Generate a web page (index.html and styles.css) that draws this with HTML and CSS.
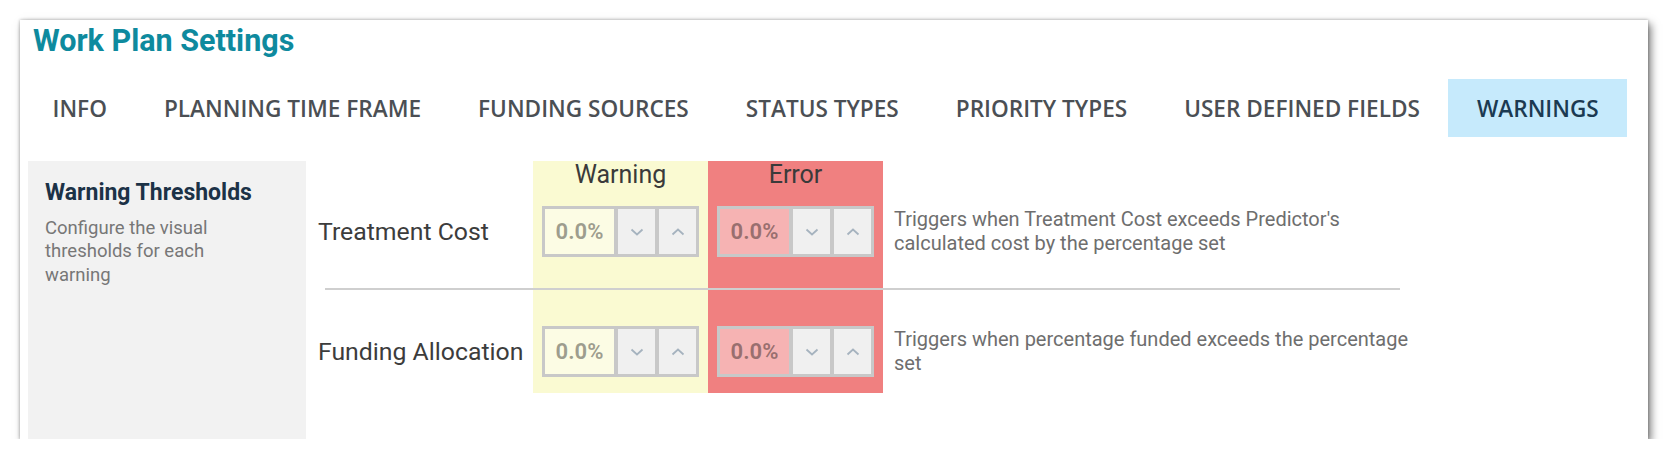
FILE: index.html
```html
<!DOCTYPE html>
<html>
<head>
<meta charset="utf-8">
<link rel="stylesheet" href="styles.css">
</head>
<body>
<div class="card">
  <h1 class="title">Work Plan Settings</h1>
  <nav class="tabs">
    <div class="tab">INFO</div>
    <div class="tab">PLANNING TIME FRAME</div>
    <div class="tab">FUNDING SOURCES</div>
    <div class="tab">STATUS TYPES</div>
    <div class="tab">PRIORITY TYPES</div>
    <div class="tab">USER DEFINED FIELDS</div>
    <div class="tab active">WARNINGS</div>
  </nav>
  <div class="main">
    <aside class="side">
      <h2 class="side-title">Warning Thresholds</h2>
      <p class="side-desc">Configure the visual thresholds for each warning</p>
    </aside>
    <div class="grid">
      <div class="bg bg-warn"></div>
      <div class="bg bg-err"></div>
      <div class="head c2">Warning</div>
      <div class="head c3">Error</div>

      <div class="label r1">Treatment Cost</div>
      <div class="spin c2 r1">
        <span class="val">0.0%</span>
        <span class="btn"><svg width="14" height="8" viewBox="0 0 14 8"><polyline points="1.5,1.5 7,6.5 12.5,1.5" fill="none" stroke="#a6b3bf" stroke-width="1.8"/></svg></span>
        <span class="btn"><svg width="14" height="8" viewBox="0 0 14 8"><polyline points="1.5,6.5 7,1.5 12.5,6.5" fill="none" stroke="#a6b3bf" stroke-width="1.8"/></svg></span>
      </div>
      <div class="spin c3 r1">
        <span class="val">0.0%</span>
        <span class="btn"><svg width="14" height="8" viewBox="0 0 14 8"><polyline points="1.5,1.5 7,6.5 12.5,1.5" fill="none" stroke="#a6b3bf" stroke-width="1.8"/></svg></span>
        <span class="btn"><svg width="14" height="8" viewBox="0 0 14 8"><polyline points="1.5,6.5 7,1.5 12.5,6.5" fill="none" stroke="#a6b3bf" stroke-width="1.8"/></svg></span>
      </div>
      <div class="desc r1">Triggers when Treatment Cost exceeds Predictor's calculated cost by the percentage set</div>

      <div class="sep"></div>

      <div class="label r2">Funding Allocation</div>
      <div class="spin c2 r2">
        <span class="val">0.0%</span>
        <span class="btn"><svg width="14" height="8" viewBox="0 0 14 8"><polyline points="1.5,1.5 7,6.5 12.5,1.5" fill="none" stroke="#a6b3bf" stroke-width="1.8"/></svg></span>
        <span class="btn"><svg width="14" height="8" viewBox="0 0 14 8"><polyline points="1.5,6.5 7,1.5 12.5,6.5" fill="none" stroke="#a6b3bf" stroke-width="1.8"/></svg></span>
      </div>
      <div class="spin c3 r2">
        <span class="val">0.0%</span>
        <span class="btn"><svg width="14" height="8" viewBox="0 0 14 8"><polyline points="1.5,1.5 7,6.5 12.5,1.5" fill="none" stroke="#a6b3bf" stroke-width="1.8"/></svg></span>
        <span class="btn"><svg width="14" height="8" viewBox="0 0 14 8"><polyline points="1.5,6.5 7,1.5 12.5,6.5" fill="none" stroke="#a6b3bf" stroke-width="1.8"/></svg></span>
      </div>
      <div class="desc r2">Triggers when percentage funded exceeds the percentage set</div>
    </div>
  </div>
</div>
</body>
</html>
```
FILE: styles.css
```css
* { box-sizing: border-box; }
html, body { margin: 0; padding: 0; background: #ffffff; }
body { font-family: Roboto, "Liberation Sans", sans-serif; }

.card {
  margin: 20px 0 0 20px;
  width: 1628px;
  background: #fff;
  box-shadow: 3px 4px 8px rgba(0,0,0,0.5), 0 0 3px rgba(0,0,0,0.3);
  padding-top: 3px;
}

.title {
  margin: 0 0 20px 13px;
  font-family: Roboto, sans-serif;
  font-weight: 700;
  font-size: 30.5px;
  line-height: 36px;
  color: #0e8a9e;
}

.tabs {
  display: flex;
  margin-left: 4px;
  height: 58px;
}
.tab {
  font-family: "Open Sans", sans-serif;
  font-weight: 600;
  font-size: 22.6px;
  line-height: 57px;
  height: 58px;
  padding: 1px 28.5px 0;
  color: #4b4f54;
  white-space: nowrap;
}
.tab.active {
  background: #c6eafc;
  color: #1b3a52;
}

.main {
  display: flex;
  margin-top: 24px;
  height: 278px;
}

.side {
  margin-left: 8px;
  width: 278px;
  background: #f2f2f2;
  padding: 19px 0 0 17px;
}
.side-title {
  margin: 0 0 11px;
  font-size: 23px;
  line-height: 26px;
  font-weight: 700;
  color: #1c3247;
}
.side-desc {
  margin: 0;
  max-width: 205px;
  font-size: 18.5px;
  line-height: 23.3px;
  color: #777777;
}

.grid {
  flex: 1;
  display: grid;
  grid-template-columns: 227px 175px 175px 1fr;
  grid-template-rows: 45px 51px 69px 51px 16px;
  align-self: flex-start;
}

.bg { grid-row: 1 / 6; }
.bg-warn { grid-column: 2; background: #fafad2; }
.bg-err { grid-column: 3; background: #f08080; }

.c2 { grid-column: 2; }
.c3 { grid-column: 3; }
.r1 { grid-row: 2; }
.r2 { grid-row: 4; }

.head {
  grid-row: 1;
  text-align: center;
  font-size: 25px;
  line-height: 28px;
  color: #3a3a3a;
}

.label {
  grid-column: 1;
  padding-left: 12px;
  font-size: 24.8px;
  line-height: 51px;
  color: #3c3c3c;
  white-space: nowrap;
}

.spin {
  display: flex;
  justify-self: center;
  width: 157px;
  height: 51px;
  border: 1px solid #c8c8c8;
}
.val {
  width: 73px;
  border: 2px solid #c8c8c8;
  background: rgba(255,255,255,0.4);
  display: flex;
  align-items: center;
  justify-content: center;
  font-size: 22px;
  font-weight: 700;
  color: rgba(0,0,0,0.38);
}
.btn {
  width: 41px;
  border: 2px solid #c8c8c8;
  background: #f0f0f0;
  display: flex;
  align-items: center;
  justify-content: center;
}

.desc {
  grid-column: 4;
  align-self: center;
  padding-left: 11px;
  max-width: 531px;
  font-size: 20px;
  line-height: 23.5px;
  color: #6e6e6e;
}

.sep {
  grid-column: 1 / 5;
  grid-row: 3;
  align-self: start;
  margin: 31px 248px 0 19px;
  height: 2px;
  background: #cfcfcf;
}
```
